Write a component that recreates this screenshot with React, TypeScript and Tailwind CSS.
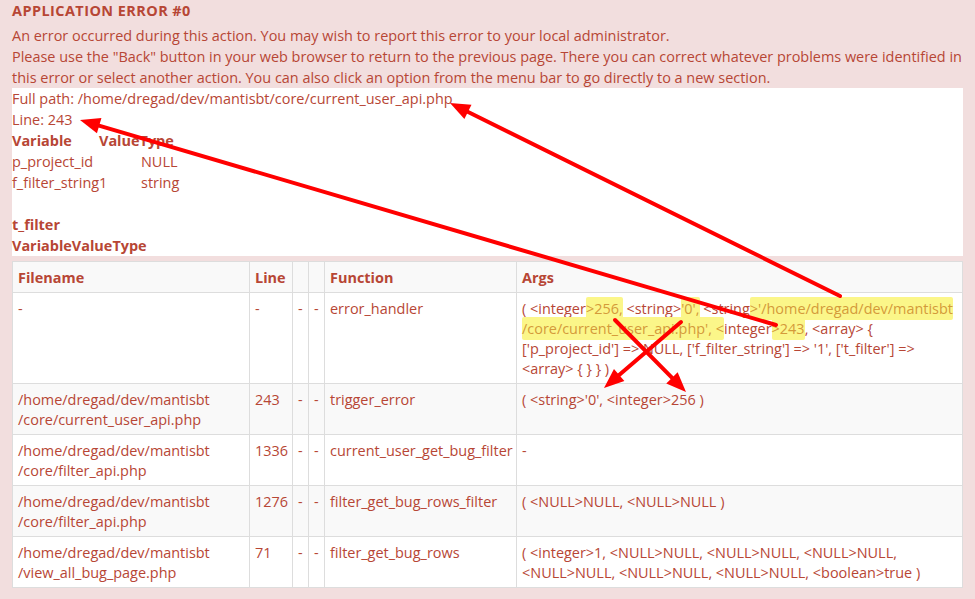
// MantisBT "APPLICATION ERROR #0" page, with the red hand-drawn annotations
// (arrows + highlighter marks) laid over the top.

const RED = "#ff0000";

type Frame = {
  file: string[];
  line: string;
  fn: string;
  args: React.ReactNode;
};

function Hl({ children }: { children: React.ReactNode }) {
  return (
    <span className="rounded-[2px] bg-[#fbf689] py-[2px] text-[#d49a3a]">
      {children}
    </span>
  );
}

const frames: Frame[] = [
  {
    file: ["-"],
    line: "-",
    fn: "error_handler",
    args: (
      <>
        ( &lt;integer<Hl>&gt;256,</Hl> &lt;string&gt;<Hl>'0',</Hl> &lt;string<Hl>&gt;'/home/dregad/dev/mantisbt</Hl>
        <br />
        <Hl>/core/current_user_api.php', &lt;</Hl>integer<Hl>&gt;243</Hl>, &lt;array&gt; {"{"}
        <br />
        ['p_project_id'] =&gt; NULL, ['f_filter_string'] =&gt; '1', ['t_filter'] =&gt;
        <br />
        &lt;array&gt; {"{ } } )"}
      </>
    ),
  },
  {
    file: ["/home/dregad/dev/mantisbt", "/core/current_user_api.php"],
    line: "243",
    fn: "trigger_error",
    args: "( <string>'0', <integer>256 )",
  },
  {
    file: ["/home/dregad/dev/mantisbt", "/core/filter_api.php"],
    line: "1336",
    fn: "current_user_get_bug_filter",
    args: "-",
  },
  {
    file: ["/home/dregad/dev/mantisbt", "/core/filter_api.php"],
    line: "1276",
    fn: "filter_get_bug_rows_filter",
    args: "( <NULL>NULL, <NULL>NULL )",
  },
  {
    file: ["/home/dregad/dev/mantisbt", "/view_all_bug_page.php"],
    line: "71",
    fn: "filter_get_bug_rows",
    args: (
      <>
        ( &lt;integer&gt;1, &lt;NULL&gt;NULL, &lt;NULL&gt;NULL, &lt;NULL&gt;NULL,
        <br />
        &lt;NULL&gt;NULL, &lt;NULL&gt;NULL, &lt;NULL&gt;NULL, &lt;boolean&gt;true )
      </>
    ),
  },
];

// Straight annotation arrow: line from tail to the base of a filled head.
function Arrow({ x1, y1, x2, y2 }: { x1: number; y1: number; x2: number; y2: number }) {
  const len = Math.hypot(x2 - x1, y2 - y1);
  const ux = (x2 - x1) / len;
  const uy = (y2 - y1) / len;
  const head = 20;
  const half = 8;
  const bx = x2 - ux * head;
  const by = y2 - uy * head;
  const nx = -uy;
  const ny = ux;
  const pts = `${x2},${y2} ${bx + nx * half},${by + ny * half} ${bx - nx * half},${by - ny * half}`;
  return (
    <g>
      <line x1={x1} y1={y1} x2={bx + ux * 2} y2={by + uy * 2} stroke={RED} strokeWidth={4} strokeLinecap="round" />
      <polygon points={pts} fill={RED} />
    </g>
  );
}

const cell = "border border-[#dddddd] px-[5px] pt-[6px] pb-[4px] align-top";

export default function App() {
  return (
    <div
      className="relative min-h-screen bg-[#f2dede] px-3 text-[14.45px] leading-[21px] text-[#b74635]"
      style={{ fontFamily: '"Open Sans", "DejaVu Sans", sans-serif' }}
    >
      <div className="font-bold uppercase tracking-[0.45px]">Application Error #0</div>

      <div className="mt-[4px]">
        <p>An error occurred during this action. You may wish to report this error to your local administrator.</p>
        <p>
          Please use the "Back" button in your web browser to return to the previous page. There you can correct
          whatever problems were identified in this error or select another action. You can also click an option
          from the menu bar to go directly to a new section.
        </p>
      </div>

      <div className="bg-white">
        <div>Full path: /home/dregad/dev/mantisbt/core/current_user_api.php</div>
        <div>Line: 243</div>
        <div className="flex font-bold">
          <span className="w-[87px]">Variable</span>
          <span>Value</span>
          <span>Type</span>
        </div>
        <div className="flex">
          <span className="w-[129px]">p_project_id</span>
          <span>NULL</span>
        </div>
        <div className="flex">
          <span className="w-[129px]">f_filter_string1</span>
          <span>string</span>
        </div>
        <div className="h-[21px]" />
        <div className="font-bold">t_filter</div>
        <div className="font-bold">
          <span>Variable</span>
          <span>Value</span>
          <span>Type</span>
        </div>
      </div>

      <table className="mt-[5px] w-[951px] table-fixed border-collapse bg-white leading-[20px]">
        <colgroup>
          <col className="w-[237px]" />
          <col className="w-[43px]" />
          <col className="w-[16px]" />
          <col className="w-[16px]" />
          <col className="w-[192px]" />
          <col />
        </colgroup>
        <tbody>
          <tr className="bg-[#f9f9f9] font-bold">
            <td className={cell}>Filename</td>
            <td className={cell}>Line</td>
            <td className={cell}></td>
            <td className={cell}></td>
            <td className={cell}>Function</td>
            <td className={cell}>Args</td>
          </tr>
          {frames.map((f, i) => (
            <tr key={i} className={i % 2 === 1 ? "bg-[#f9f9f9]" : "bg-white"}>
              <td className={cell}>
                {f.file.map((part, j) => (
                  <div key={j}>{part}</div>
                ))}
              </td>
              <td className={cell}>{f.line}</td>
              <td className={cell}>-</td>
              <td className={cell}>-</td>
              <td className={cell + " whitespace-nowrap"}>{f.fn}</td>
              <td className={cell}>{f.args}</td>
            </tr>
          ))}
        </tbody>
      </table>

      {/* annotations drawn over the page */}
      <svg className="pointer-events-none absolute left-0 top-0" width={975} height={599}>
        <Arrow x1={840} y1={296} x2={450} y2={103} />
        <Arrow x1={776} y1={325} x2={80} y2={120} />
        <Arrow x1={681} y1={322} x2={604} y2={388} />
        <Arrow x1={615} y1={320} x2={686} y2={392} />
      </svg>
    </div>
  );
}
